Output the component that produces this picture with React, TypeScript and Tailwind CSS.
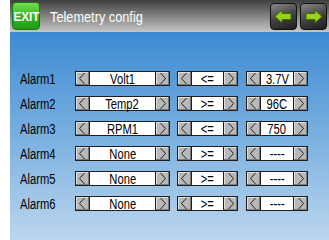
import React from "react";

// ─── Small pieces ─────────────────────────────────────────────────────────────

const FONT = "font-['Liberation_Sans',Arial,sans-serif]";

function ArrowBtn({ dir }: { dir: "l" | "r" }) {
  return (
    <button className="w-[15px] h-[15px] shrink-0 bg-[#b8b8b8] border border-[#1e1e1e] shadow-[inset_-1px_-1px_0_#7a7a7a,inset_1px_1px_0_#e0e0e0] flex items-center justify-center p-0">
      <svg width="13" height="13" viewBox="0 0 13 13">
        {dir === "l" ? (
          <polyline points="8.5,1 3.5,6.5 8.5,12" fill="none" stroke="#111" strokeWidth="0.9" />
        ) : (
          <polyline points="4.5,1 9.5,6.5 4.5,12" fill="none" stroke="#111" strokeWidth="0.9" />
        )}
      </svg>
    </button>
  );
}

function Spinner({ value, width }: { value: string; width: string }) {
  return (
    <div className="flex items-center">
      <ArrowBtn dir="l" />
      <div
        className={`${width} h-[15px] bg-white border-y border-[#1e1e1e] flex items-center justify-center text-[14px] leading-none text-black`}
      >
        <span className="inline-block scale-x-[0.8]">{value}</span>
      </div>
      <ArrowBtn dir="r" />
    </div>
  );
}

function NavBtn({ dir }: { dir: "l" | "r" }) {
  return (
    <button className="w-[27px] h-[27px] rounded-[4px] border border-[#111] bg-[linear-gradient(160deg,#8a8a8a,#444_50%,#1c1c1c)] flex items-center justify-center p-0">
      <svg width="19" height="15" viewBox="0 0 19 15">
        {dir === "l" ? (
          <polygon points="1,7.5 8,1 8,4.5 17,4.5 17,10.5 8,10.5 8,14" fill="#9ad21a" stroke="#3f6a00" strokeWidth="1" />
        ) : (
          <polygon points="18,7.5 11,1 11,4.5 2,4.5 2,10.5 11,10.5 11,14" fill="#9ad21a" stroke="#3f6a00" strokeWidth="1" />
        )}
      </svg>
    </button>
  );
}

// ─── Data ─────────────────────────────────────────────────────────────────────

const alarms = [
  { name: "Alarm1", source: "Volt1", op: "<=", value: "3.7V" },
  { name: "Alarm2", source: "Temp2", op: ">=", value: "96C" },
  { name: "Alarm3", source: "RPM1", op: "<=", value: "750" },
  { name: "Alarm4", source: "None", op: ">=", value: "----" },
  { name: "Alarm5", source: "None", op: ">=", value: "----" },
  { name: "Alarm6", source: "None", op: ">=", value: "----" },
];

// ─── App ──────────────────────────────────────────────────────────────────────

export default function App() {
  return (
    <div className={`w-[329px] h-[240px] bg-white flex overflow-hidden ${FONT}`}>
      <div className="ml-[10px] w-[319px] h-full flex flex-col">
        {/* header */}
        <div className="h-[32px] shrink-0 bg-[linear-gradient(#3e3e3e,#8a8a8a_55%,#c6c6c6)] flex items-center pl-[2px] pr-[2px] gap-[10px]">
          <button className="w-[28px] h-[28px] rounded-[4px] border border-[#1b7a12] bg-[linear-gradient(#6fe04a,#34b424_55%,#1f9a17)] text-white font-bold text-[13px] leading-none flex items-center justify-center p-0">
            <span className="inline-block scale-x-[0.9]">EXIT</span>
          </button>
          <span className="text-white text-[15px] leading-none inline-block scale-x-[0.85] origin-left">
            Telemetry config
          </span>
          <div className="ml-auto flex gap-[3px]">
            <NavBtn dir="l" />
            <NavBtn dir="r" />
          </div>
        </div>

        {/* body */}
        <div className="flex-1 bg-[linear-gradient(#3c8ad2,#7ab0e0_50%,#bcd6ee)] pt-[39px] pl-[10px] flex flex-col gap-[10px]">
          {alarms.map((a) => (
            <div key={a.name} className="flex items-center h-[15px] text-black">
              <span className="w-[55px] text-[14px] leading-none">
                <span className="inline-block scale-x-[0.8] origin-left">{a.name}</span>
              </span>
              <Spinner value={a.source} width="w-[65px]" />
              <div className="w-[7px]" />
              <Spinner value={a.op} width="w-[31px]" />
              <div className="w-[8px]" />
              <Spinner value={a.value} width="w-[32px]" />
            </div>
          ))}
        </div>
      </div>
    </div>
  );
}
